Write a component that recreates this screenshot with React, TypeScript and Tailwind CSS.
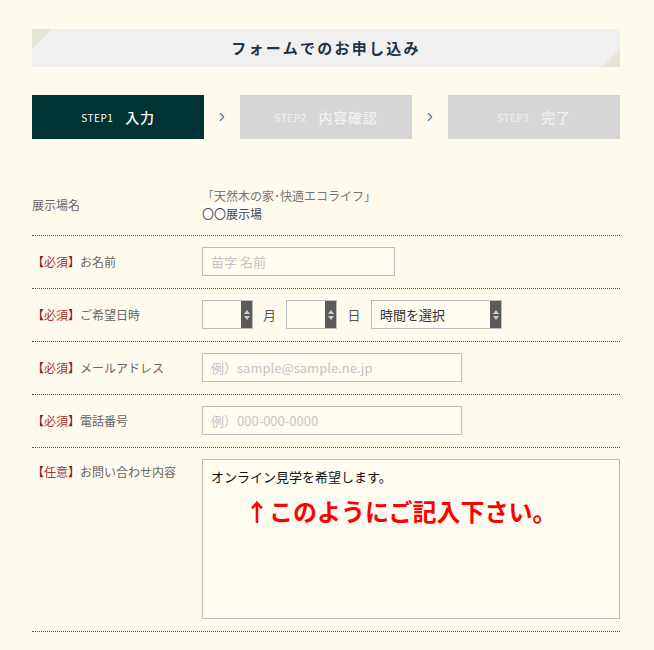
import { ChevronRight } from "lucide-react";

const jp = { fontFamily: '"Noto Sans CJK JP", "Noto Sans", sans-serif' };

const Spinner = () => (
  <div className="w-[11px] self-stretch bg-[#5a5a5a] flex flex-col items-center justify-center gap-[2px]">
    <span className="w-0 h-0 border-l-[3px] border-r-[3px] border-b-[4px] border-l-transparent border-r-transparent border-b-[#cfcfcf]" />
    <span className="w-0 h-0 border-l-[3px] border-r-[3px] border-t-[4px] border-l-transparent border-r-transparent border-t-[#cfcfcf]" />
  </div>
);

const Label = ({ tag, text }: { tag?: string; text: string }) => (
  <div className="w-[170px] shrink-0 text-[12px] text-[#666]">
    {tag && (
      <span className="text-[#a33]">
        <span className="text-[#8b2020]">【</span>
        {tag}
        <span className="text-[#8b2020]">】</span>
      </span>
    )}
    {text}
  </div>
);

const Row = ({ children, top }: { children: React.ReactNode; top?: boolean }) => (
  <div className={`flex ${top ? "items-start" : "items-center"} pt-[11px] pb-3 border-b border-dotted border-[#2f5d91]`}>
    {children}
  </div>
);

const TextBox = ({ w, placeholder }: { w: string; placeholder: string }) => (
  <div className={`${w} h-[29px] border border-[#bcbcbc] bg-[#fffcf2] flex items-center px-2 text-[13px] text-[#c4c4c4]`}>
    {placeholder}
  </div>
);

export default function App() {
  const steps = [
    { n: "STEP1", t: "入力", active: true },
    { n: "STEP2", t: "内容確認", active: false },
    { n: "STEP3", t: "完了", active: false },
  ];

  return (
    <div className="min-h-[650px] bg-[#fffaee] pt-[29px] pl-8" style={jp}>
      <div className="w-[588px]">
        {/* Title bar */}
        <div className="relative h-[38px] bg-[#f0f0f0] flex items-center justify-center overflow-hidden">
          <span className="absolute left-0 top-0 w-0 h-0 border-t-[20px] border-r-[20px] border-t-[#e6e6d4] border-r-transparent" />
          <span className="absolute right-0 bottom-0 w-0 h-0 border-b-[18px] border-l-[18px] border-b-[#e6e6d4] border-l-transparent" />
          <h2 className="text-[15px] font-semibold tracking-[0.15em] text-[#1f3344]">フォームでのお申し込み</h2>
        </div>

        {/* Steps */}
        <div className="mt-[28px] flex items-center">
          {steps.map((s, i) => (
            <div key={s.n} className="flex items-center">
              {i > 0 && (
                <div className="w-[36px] flex justify-center">
                  <ChevronRight className="w-[14px] h-[14px] text-[#5f74a3]" strokeWidth={2} />
                </div>
              )}
              <div
                className={`w-[172px] h-[44px] flex items-center justify-center gap-3 ${
                  s.active ? "bg-[#003333] text-white" : "bg-[#d6d6d6] text-[#f2f2f2]"
                }`}
              >
                <span className="text-[10px] tracking-wider">{s.n}</span>
                <span className="text-[14px] font-medium tracking-wider">{s.t}</span>
              </div>
            </div>
          ))}
        </div>

        {/* Form */}
        <div className="mt-[37px]">
          <Row>
            <Label text="展示場名" />
            <div className="text-[12px] leading-[18px] text-[#777]">
              <div>「天然木の家･快適エコライフ」</div>
              <div className="text-[#444]">
                <span className="bg-white">〇〇展示場</span>
              </div>
            </div>
          </Row>

          <Row>
            <Label tag="必須" text="お名前" />
            <TextBox w="w-[193px]" placeholder="苗字 名前" />
          </Row>

          <Row>
            <Label tag="必須" text="ご希望日時" />
            <div className="flex items-center text-[13px] text-[#555]">
              <div className="w-[51px] h-[29px] border border-[#bcbcbc] bg-[#fffcf2] flex justify-end">
                <Spinner />
              </div>
              <span className="w-[33px] text-center">月</span>
              <div className="w-[51px] h-[29px] border border-[#bcbcbc] bg-[#fffcf2] flex justify-end">
                <Spinner />
              </div>
              <span className="w-[34px] text-center">日</span>
              <div className="w-[131px] h-[29px] border border-[#bcbcbc] bg-[#fffcf2] flex items-center justify-between">
                <span className="pl-2 text-[#333]">時間を選択</span>
                <Spinner />
              </div>
            </div>
          </Row>

          <Row>
            <Label tag="必須" text="メールアドレス" />
            <TextBox w="w-[260px]" placeholder="例）sample@sample.ne.jp" />
          </Row>

          <Row>
            <Label tag="必須" text="電話番号" />
            <TextBox w="w-[260px]" placeholder="例）000-000-0000" />
          </Row>

          <Row top>
            <div className="pt-[4px]">
              <Label tag="任意" text="お問い合わせ内容" />
            </div>
            <div className="flex-1 h-[160px] border border-[#bcbcbc] bg-[#fffcf2] px-2 pt-[7px]">
              <div className="text-[13px] text-[#111]">オンライン見学を希望します。</div>
              <div className="mt-[8px] pl-[34px] text-[24px] font-bold text-[#ff0000] leading-[32px]">
                ↑このようにご記入下さい。
              </div>
            </div>
          </Row>
        </div>
      </div>
    </div>
  );
}
